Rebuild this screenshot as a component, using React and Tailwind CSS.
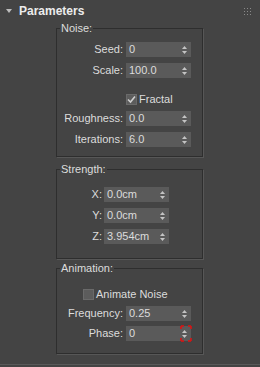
import React from "react";

const font = "font-['Liberation_Sans',Arial,sans-serif]";

const Arrows = () => (
  <svg width="5" height="8" viewBox="0 0 5 8" className="mr-[4px] shrink-0">
    <path d="M2.5 0 L5 3 L0 3 Z" fill="#c4c4c4" />
    <path d="M0 5 L5 5 L2.5 8 Z" fill="#c4c4c4" />
  </svg>
);

const Spinner = ({ value, keyed }) => (
  <div className="relative flex h-[15px] w-[65px] items-center bg-[#5a5a5a] pl-[3px] text-[11px] leading-[15px] text-[#dcdcdc]">
    <span className="flex-1">{value}</span>
    <Arrows />
    {keyed && (
      // red key brackets around the spinner buttons
      <svg width="12" height="17" viewBox="0 0 12 17" className="absolute right-[-1px] top-[-1px]">
        <path d="M1 1 H4 M1 1 V4 M11 1 H8 M11 1 V4 M1 16 H4 M1 16 V13 M11 16 H8 M11 16 V13" stroke="#e01010" strokeWidth="1.5" fill="none" />
      </svg>
    )}
  </div>
);

const Row = ({ label, labelW, gap, className, children }) => (
  <div className={`flex items-center ${gap} ${className}`}>
    <span className={`${labelW} text-right text-[11px] leading-[15px] text-[#dcdcdc]`}>{label}</span>
    {children}
  </div>
);

const Check = ({ checked, label, className }) => (
  <div className={`flex items-center gap-[2px] ${className}`}>
    <div className="flex h-[11px] w-[11px] items-center justify-center border border-[#6a6a6a] bg-[#5c5c5c]">
      {checked && (
        <svg width="9" height="9" viewBox="0 0 9 9">
          <path d="M1 4.5 L3.5 7 L8 1.5" stroke="#cfcfcf" strokeWidth="1.6" fill="none" />
        </svg>
      )}
    </div>
    <span className="text-[11px] leading-[15px] text-[#dcdcdc]">{label}</span>
  </div>
);

const Group = ({ title, className, children }) => (
  <fieldset className={`ml-[56px] w-[147px] border border-[#2e2e2e] shadow-[1px_1px_0_#575757] ${className}`}>
    <legend className="ml-[3px] px-[1px] text-[11px] leading-[13px] text-[#dcdcdc]">{title}</legend>
    {children}
  </fieldset>
);

export default function App() {
  return (
    <div className={`h-[367px] w-[260px] bg-[#444444] ${font}`}>
      <div className="h-[365px] border-b border-[#595959]">
        <div className="flex h-[22px] items-center">
          <svg width="6" height="4" viewBox="0 0 6 4" className="ml-[6px]">
            <path d="M0 0 H6 L3 4 Z" fill="#bdbdbd" />
          </svg>
          <span className="ml-[7px] flex-1 text-[12px] font-bold text-[#ececec]">Parameters</span>
          <div className="mr-[9px] grid grid-cols-3 gap-[2px]">
            {Array.from({ length: 9 }).map((_, i) => (
              <div key={i} className="h-[1px] w-[1px] bg-[#8a8a8a]" />
            ))}
          </div>
        </div>

        <Group title="Noise:" className="pb-[9px]">
          <Row label="Seed:" labelW="w-[66px]" gap="gap-[3px]" className="mt-[7px]">
            <Spinner value="0" />
          </Row>
          <Row label="Scale:" labelW="w-[66px]" gap="gap-[3px]" className="mt-[6px]">
            <Spinner value="100.0" />
          </Row>
          <Check checked label="Fractal" className="ml-[69px] mt-[14px]" />
          <Row label="Roughness:" labelW="w-[66px]" gap="gap-[3px]" className="mt-[4px]">
            <Spinner value="0.0" />
          </Row>
          <Row label="Iterations:" labelW="w-[66px]" gap="gap-[3px]" className="mt-[6px]">
            <Spinner value="6.0" />
          </Row>
        </Group>

        <Group title="Strength:" className="mt-[6px] pb-[14px]">
          <Row label="X:" labelW="w-[45px]" gap="gap-[2px]" className="mt-[11px]">
            <Spinner value="0.0cm" />
          </Row>
          <Row label="Y:" labelW="w-[45px]" gap="gap-[2px]" className="mt-[6px]">
            <Spinner value="0.0cm" />
          </Row>
          <Row label="Z:" labelW="w-[45px]" gap="gap-[2px]" className="mt-[6px]">
            <Spinner value="3.954cm" />
          </Row>
        </Group>

        <Group title="Animation:" className="mt-[3px] pb-[12px]">
          <Check label="Animate Noise" className="ml-[26px] mt-[12px]" />
          <Row label="Frequency:" labelW="w-[66px]" gap="gap-[3px]" className="mt-[4px]">
            <Spinner value="0.25" />
          </Row>
          <Row label="Phase:" labelW="w-[66px]" gap="gap-[3px]" className="mt-[5px]">
            <Spinner value="0" keyed />
          </Row>
        </Group>
      </div>
    </div>
  );
}
